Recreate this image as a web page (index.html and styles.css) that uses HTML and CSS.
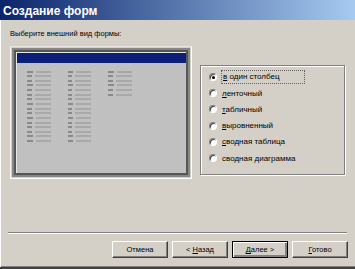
FILE: index.html
```html
<!DOCTYPE html>
<html lang="ru">
<head>
    <meta charset="UTF-8">
    <meta name="viewport" content="width=device-width, initial-scale=1.0">
    <title>Создание форм</title>
    <link rel="stylesheet" href="styles.css">
</head>
<body>

    <div class="window">
        <div class="titlebar">Создание форм</div>

        <p class="prompt">Выберите внешний вид формы:</p>

        <div class="main">
            <div class="preview">
                <div class="screen">
                    <div class="display">
                        <div class="display-title"></div>
                        <div class="fields">
                            <div class="col">
                                <i class="s"></i><i class="l"></i><i class="l"></i><i class="s"></i>
                                <i class="l"></i><i class="l"></i><i class="l"></i><i class="s"></i>
                                <i class="l"></i><i class="l"></i><i class="s"></i><i class="l"></i>
                                <i class="l"></i><i class="l"></i><i class="s"></i><i class="s"></i>
                            </div>
                            <div class="col">
                                <i class="s"></i><i class="l"></i><i class="l"></i><i class="s"></i>
                                <i class="l"></i><i class="l"></i><i class="l"></i><i class="s"></i>
                                <i class="l"></i><i class="l"></i><i class="s"></i><i class="l"></i>
                                <i class="l"></i><i class="l"></i><i class="s"></i><i class="s"></i>
                            </div>
                            <div class="col">
                                <i class="s"></i><i class="l"></i><i class="l"></i><i class="s"></i>
                                <i class="l"></i><i class="l"></i>
                            </div>
                        </div>
                    </div>
                </div>
            </div>

            <div class="layouts">
                <div class="option"><span class="radio checked"></span><span class="focus"><u>в</u> один столбец</span></div>
                <div class="option"><span class="radio"></span><span><u>л</u>енточный</span></div>
                <div class="option"><span class="radio"></span><span><u>т</u>абличный</span></div>
                <div class="option"><span class="radio"></span><span><u>в</u>ыровненный</span></div>
                <div class="option"><span class="radio"></span><span><u>с</u>водная таблица</span></div>
                <div class="option"><span class="radio"></span><span>сводная <u>д</u>иаграмма</span></div>
            </div>
        </div>

        <div class="separator"></div>

        <div class="buttons">
            <button type="button">Отмена</button>
            <button type="button">&lt; <u>Н</u>азад</button>
            <button type="button" class="default"><u>Д</u>алее &gt;</button>
            <button type="button"><u>Г</u>отово</button>
        </div>
    </div>

</body>
</html>
```

FILE: styles.css
```css
body {
    margin: 0;
    padding: 0;
    font-family: "Liberation Sans", Arial, sans-serif;
    font-size: 7.5px;
    color: #000;
    background: #d4d0c8;
}
.window {
    width: 355px;
    height: 269px;
    box-sizing: border-box;
    overflow: hidden;
    background: #d4d0c8;
    border-bottom: 2px solid #404040;
    box-shadow: inset 1px 0 0 #fff, inset 0 -1px 0 #808080;
}
.titlebar {
    height: 20px;
    box-sizing: border-box;
    padding: 3px 0 0 3px;
    line-height: 16px;
    font-size: 12px;
    font-weight: bold;
    color: #fff;
    background: linear-gradient(to right, #0a246a, #a6caf0);
}
.prompt {
    margin: 0;
    padding: 9px 10px 0;
    line-height: 10px;
}
.main {
    display: flex;
    align-items: flex-start;
    height: 133px;
    margin-top: 7px;
    padding-left: 10px;
}
.preview {
    width: 182px;
    height: 133px;
    box-sizing: border-box;
    border: 1px solid #fff;
    border-top-color: #e8e6e2;
    border-left-color: #f4f3f0;
    padding: 1px;
}
.screen {
    height: 100%;
    box-sizing: border-box;
    border: 2px solid #868686;
    padding: 2px;
    background: #565656;
}
.display {
    height: 100%;
    box-sizing: border-box;
    border-top: 1px solid #e8e8e8;
    border-left: 1px solid #e8e8e8;
    background: #c0c0c0;
}
.display-title {
    height: 10px;
    background: #0c1f78;
}
.fields {
    display: flex;
    gap: 17px;
    padding: 7.5px 0 0 10px;
}
.col {
    display: flex;
    flex-direction: column;
    width: 23.5px;
}
.col i {
    display: flex;
    gap: 3px;
    height: 2px;
    margin-bottom: 2.65px;
}
.col i::before {
    content: "";
    width: 7px;
    background: #8a8a8a;
}
.col i::after {
    content: "";
    width: 23px;
    background: #a8a8a8;
}
.col i.s::after {
    width: 17px;
}
.layouts {
    width: 145px;
    height: 110px;
    box-sizing: border-box;
    margin: 19px 0 0 8px;
    padding: 3px 0 0 8px;
    border: 1px solid #808080;
    box-shadow: inset 1px 1px 0 #fff, 1px 1px 0 #fff;
}
.option {
    display: flex;
    align-items: center;
    gap: 5px;
    height: 16.2px;
    font-size: 8px;
}
.radio {
    width: 8px;
    height: 8px;
    box-sizing: border-box;
    border-radius: 50%;
    border: 1px solid;
    border-color: #808080 #fff #fff #808080;
    background: #fff;
    box-shadow: inset 1px 1px 0 #404040;
    position: relative;
}
.radio.checked::after {
    content: "";
    position: absolute;
    left: 2px;
    top: 2px;
    width: 3px;
    height: 3px;
    border-radius: 50%;
    background: #000;
}
.focus {
    width: 80px;
    margin-left: -1px;
    padding: 1px 1px 2px;
    border: 1px dotted #606060;
}
.separator {
    margin: 53px 8px 0;
    border-top: 1px solid #808080;
    border-bottom: 1px solid #fff;
}
.buttons {
    display: flex;
    justify-content: flex-end;
    gap: 4px;
    margin-top: 7px;
    padding-right: 7px;
}
button {
    width: 56px;
    height: 17px;
    padding: 0;
    font-family: "Liberation Sans", Arial, sans-serif;
    font-size: 7.5px;
    color: #000;
    background: #d4d0c8;
    border: 1px solid;
    border-color: #fff #404040 #404040 #fff;
    box-shadow: inset -1px -1px 0 #808080;
}
button.default {
    border: 1px solid #000;
    box-shadow: inset 1px 1px 0 #fff, inset -2px -2px 0 #808080;
}
```
